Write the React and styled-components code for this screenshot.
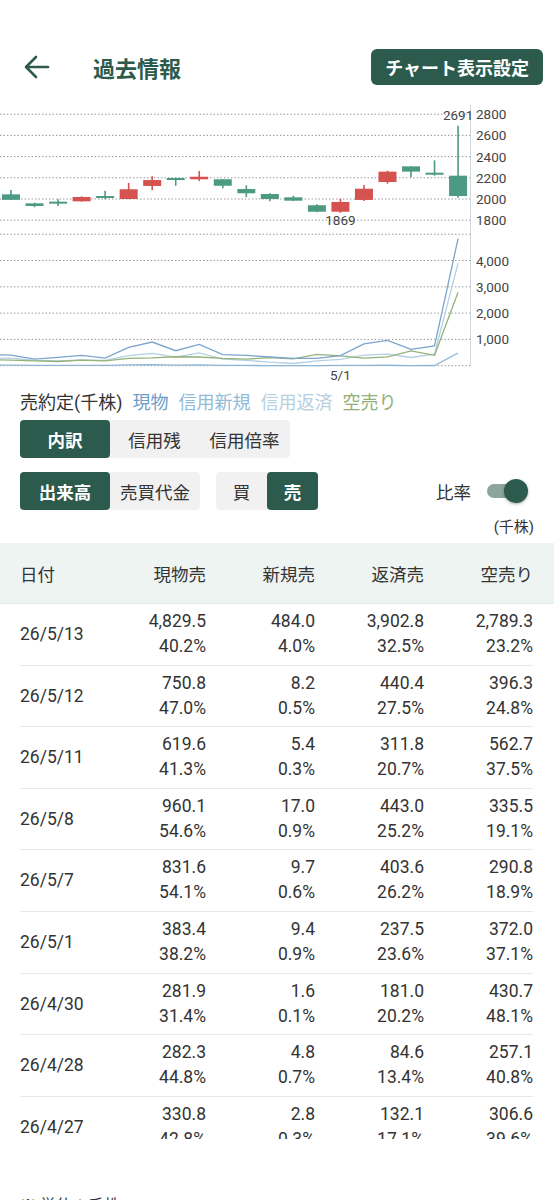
import React from 'react';
import styled, { createGlobalStyle } from 'styled-components';

const GREEN = '#2c5b4d';

const GlobalStyle = createGlobalStyle`
  body {
    margin: 0;
    background: #fff;
    font-family: Roboto, 'Noto Sans CJK JP', sans-serif;
    color: #333;
  }
`;

const Page = styled.div`
  width: 554px;
  height: 1200px;
  overflow: hidden;
`;

const Header = styled.header`
  display: flex;
  align-items: center;
  height: 36px;
  padding: 49px 11px 0 24px;
`;
const BackButton = styled.button`
  border: 0;
  background: none;
  padding: 0;
  display: flex;
  color: ${GREEN};
`;
const Title = styled.h1`
  flex: 1;
  margin: 0 0 0 43px;
  font-size: 22px;
  font-weight: 700;
  color: ${GREEN};
`;
const SettingsButton = styled.button`
  height: 36px;
  padding: 0 14px;
  border: 0;
  border-radius: 6px;
  background: ${GREEN};
  color: #fff;
  font-family: inherit;
  font-size: 18px;
  font-weight: 700;
`;

const Chart = styled.svg`
  display: block;
  margin-top: 15px;
  width: 554px;
  height: 284px;
  font-family: Roboto, sans-serif;
`;

const Legend = styled.div`
  display: flex;
  gap: 10px;
  margin-top: 7px;
  padding: 0 20px;
  font-size: 18px;
  line-height: 24px;
`;
const LegendItem = styled.span`
  color: ${(p) => p.$color || '#333'};
`;

const Controls = styled.div`
  display: flex;
  align-items: center;
  gap: 16px;
  margin-top: ${(p) => p.$top}px;
  padding: 0 26px 0 20px;
`;
const Segments = styled.div`
  display: flex;
  border-radius: 4px;
  background: #f1f1f1;
`;
const SegButton = styled.button`
  width: ${(p) => p.$w}px;
  height: 38px;
  padding: 0;
  border: 0;
  border-radius: 4px;
  background: ${(p) => (p.$active ? GREEN : 'transparent')};
  color: ${(p) => (p.$active ? '#fff' : '#333')};
  font-family: inherit;
  font-size: 17.5px;
  font-weight: ${(p) => (p.$active ? 700 : 400)};
`;
const Spacer = styled.div`
  flex: 1;
`;
const RatioLabel = styled.span`
  font-size: 17.5px;
`;
const Switch = styled.div`
  position: relative;
  width: 41px;
  height: 24px;
`;
const Track = styled.div`
  position: absolute;
  left: 0;
  top: 5px;
  width: 34px;
  height: 14px;
  border-radius: 7px;
  background: #8ba69d;
`;
const Knob = styled.div`
  position: absolute;
  right: 0;
  top: 0;
  width: 24px;
  height: 24px;
  border-radius: 50%;
  background: ${GREEN};
  box-shadow: 0 1px 3px rgba(0, 0, 0, 0.35);
`;

const Unit = styled.div`
  margin-top: 7px;
  padding-right: 20px;
  text-align: right;
  font-size: 15px;
  line-height: 20px;
`;

const TableWrap = styled.div`
  margin-top: 6px;
  height: 596px;
  overflow: hidden;
`;
const HeadRow = styled.div`
  display: grid;
  grid-template-columns: 77px repeat(4, 109px);
  align-items: center;
  height: 60px;
  padding: 0 21px 0 20px;
  background: #eef4f2;
  border-bottom: 1px solid #e2eae7;
  font-size: 17.5px;
`;
const HeadCell = styled.div`
  text-align: ${(p) => (p.$left ? 'left' : 'right')};
`;
const Row = styled.div`
  display: grid;
  grid-template-columns: 77px repeat(4, 109px);
  align-items: center;
  margin: 0 21px 0 20px;
  padding: 5px 0 5.6px;
  border-bottom: 1px solid #e8e8e8;
  font-size: 17.5px;
`;
const DateCell = styled.div``;
const NumCell = styled.div`
  text-align: right;
  line-height: 25px;
`;

const Footer = styled.div`
  margin-top: 57px;
  padding-left: 20px;
  font-size: 16px;
  line-height: 20px;
`;

const rows = [
  ['26/5/13', ['4,829.5', '40.2%'], ['484.0', '4.0%'], ['3,902.8', '32.5%'], ['2,789.3', '23.2%']],
  ['26/5/12', ['750.8', '47.0%'], ['8.2', '0.5%'], ['440.4', '27.5%'], ['396.3', '24.8%']],
  ['26/5/11', ['619.6', '41.3%'], ['5.4', '0.3%'], ['311.8', '20.7%'], ['562.7', '37.5%']],
  ['26/5/8', ['960.1', '54.6%'], ['17.0', '0.9%'], ['443.0', '25.2%'], ['335.5', '19.1%']],
  ['26/5/7', ['831.6', '54.1%'], ['9.7', '0.6%'], ['403.6', '26.2%'], ['290.8', '18.9%']],
  ['26/5/1', ['383.4', '38.2%'], ['9.4', '0.9%'], ['237.5', '23.6%'], ['372.0', '37.1%']],
  ['26/4/30', ['281.9', '31.4%'], ['1.6', '0.1%'], ['181.0', '20.2%'], ['430.7', '48.1%']],
  ['26/4/28', ['282.3', '44.8%'], ['4.8', '0.7%'], ['84.6', '13.4%'], ['257.1', '40.8%']],
  ['26/4/27', ['330.8', '42.8%'], ['2.8', '0.3%'], ['132.1', '17.1%'], ['306.6', '39.6%']],
];

// [open, high, low, close]
const candles = [
  [2044, 2085, 1990, 1992], [1959, 1965, 1922, 1934], [1975, 1997, 1934, 1956],
  [1978, 2025, 1975, 2019], [2028, 2078, 1997, 2019], [2000, 2151, 1998, 2092],
  [2123, 2214, 2082, 2179], [2198, 2200, 2125, 2186], [2186, 2264, 2170, 2210],
  [2186, 2188, 2101, 2125], [2094, 2129, 2019, 2054], [2047, 2054, 1978, 2000],
  [2016, 2031, 1981, 1984], [1941, 1950, 1875, 1880], [1880, 2003, 1869, 1972],
  [1991, 2132, 1981, 2097], [2160, 2267, 2144, 2258], [2308, 2310, 2205, 2258],
  [2248, 2365, 2220, 2240], [2220, 2691, 2012, 2028],
];

const volumes = [
  { color: '#8db6d6', data: [25, 20, 15, 10, 15, 10, 30, 40, 20, 30, 10, 10, 2.8, 4.8, 1.6, 9.4, 9.7, 17, 5.4, 8.2, 484] },
  { color: '#b4d0e3', data: [280, 290, 200, 180, 220, 200, 380, 470, 330, 490, 250, 200, 132.1, 84.6, 181, 237.5, 403.6, 443, 311.8, 440.4, 3902.8] },
  { color: '#93b27c', data: [230, 215, 180, 160, 210, 180, 280, 300, 340, 330, 280, 250, 306.6, 257.1, 430.7, 372, 290.8, 335.5, 562.7, 396.3, 2789.3] },
  { color: '#7ba5cd', data: [420, 400, 250, 320, 390, 290, 700, 900, 570, 810, 420, 390, 330.8, 282.3, 281.9, 383.4, 831.6, 960.1, 619.6, 750.8, 4829.5] },
];

const cx = (i) => 11 + i * 23.53;
const py = (p) => 99 - (p - 2000) / 9.434;
const vy = (v) => 265.7 - v * 0.0263;

const Dotted = ({ y }) => (
  <line x1="0" x2="470" y1={y} y2={y} stroke="#9a9a9a" strokeDasharray="1.5 2" />
);

const CandleChart = () => (
  <Chart viewBox="0 0 554 284">
    {[2800, 2600, 2400, 2200, 2000, 1800].map((p) => (
      <g key={p}>
        <Dotted y={py(p)} />
        <text x="476" y={py(p)} dominantBaseline="central" fontSize="13.5" fill="#444">{p}</text>
      </g>
    ))}
    <Dotted y={134.2} />
    {[4000, 3000, 2000, 1000].map((v) => (
      <g key={v}>
        <Dotted y={vy(v)} />
        <text x="476" y={vy(v)} dominantBaseline="central" fontSize="13.5" fill="#444">{v.toLocaleString('en-US')}</text>
      </g>
    ))}
    <Dotted y={265.7} />
    <line x1="470.5" x2="470.5" y1="5" y2="266" stroke="#cfd8dc" />
    {candles.map(([o, h, l, c], i) => {
      const up = c > o;
      const col = up ? '#d4534f' : '#4c9a83';
      const top = py(Math.max(o, c));
      const bh = Math.max(py(Math.min(o, c)) - top, 2);
      return (
        <g key={i}>
          <line x1={cx(i)} x2={cx(i)} y1={py(h)} y2={py(l)} stroke={col} strokeWidth="1.6" />
          <rect x={cx(i) - 9} y={top} width="18" height={bh} fill={col} />
        </g>
      );
    })}
    <text x={cx(19)} y={py(2691) - 6} textAnchor="middle" fontSize="13.5" fill="#444">2691</text>
    <text x={cx(14)} y={py(1869) + 12} textAnchor="middle" fontSize="13.5" fill="#444">1869</text>
    {volumes.map((s) => (
      <polyline
        key={s.color}
        fill="none"
        stroke={s.color}
        strokeWidth="1.3"
        points={s.data.map((v, i) => `${cx(i - 1)},${vy(v)}`).join(' ')}
      />
    ))}
    <text x={cx(14)} y="275" textAnchor="middle" dominantBaseline="central" fontSize="13.5" fill="#444">5/1</text>
  </Chart>
);

const App = () => (
  <Page>
    <GlobalStyle />
    <Header>
      <BackButton aria-label="戻る">
        <svg width="26" height="24" viewBox="0 0 26 24" fill="none" stroke="currentColor" strokeWidth="2.6" strokeLinecap="round" strokeLinejoin="round">
          <path d="M24 12H2M12 2L2 12l10 10" />
        </svg>
      </BackButton>
      <Title>過去情報</Title>
      <SettingsButton>チャート表示設定</SettingsButton>
    </Header>
    <CandleChart />
    <Legend>
      <LegendItem>売約定(千株)</LegendItem>
      <LegendItem $color="#6e9dc8">現物</LegendItem>
      <LegendItem $color="#93bad8">信用新規</LegendItem>
      <LegendItem $color="#b6d0e2">信用返済</LegendItem>
      <LegendItem $color="#90b07a">空売り</LegendItem>
    </Legend>
    <Controls $top={5}>
      <Segments>
        <SegButton $w={90} $active>内訳</SegButton>
        <SegButton $w={89}>信用残</SegButton>
        <SegButton $w={91}>信用倍率</SegButton>
      </Segments>
    </Controls>
    <Controls $top={14}>
      <Segments>
        <SegButton $w={90} $active>出来高</SegButton>
        <SegButton $w={90}>売買代金</SegButton>
      </Segments>
      <Segments>
        <SegButton $w={51}>買</SegButton>
        <SegButton $w={51} $active>売</SegButton>
      </Segments>
      <Spacer />
      <RatioLabel>比率</RatioLabel>
      <Switch>
        <Track />
        <Knob />
      </Switch>
    </Controls>
    <Unit>(千株)</Unit>
    <TableWrap>
      <HeadRow>
        <HeadCell $left>日付</HeadCell>
        <HeadCell>現物売</HeadCell>
        <HeadCell>新規売</HeadCell>
        <HeadCell>返済売</HeadCell>
        <HeadCell>空売り</HeadCell>
      </HeadRow>
      {rows.map(([date, ...cells]) => (
        <Row key={date}>
          <DateCell>{date}</DateCell>
          {cells.map(([v, pct], i) => (
            <NumCell key={i}>
              {v}
              <br />
              {pct}
            </NumCell>
          ))}
        </Row>
      ))}
    </TableWrap>
    <Footer>※ 単位：千株</Footer>
  </Page>
);

export default App;
